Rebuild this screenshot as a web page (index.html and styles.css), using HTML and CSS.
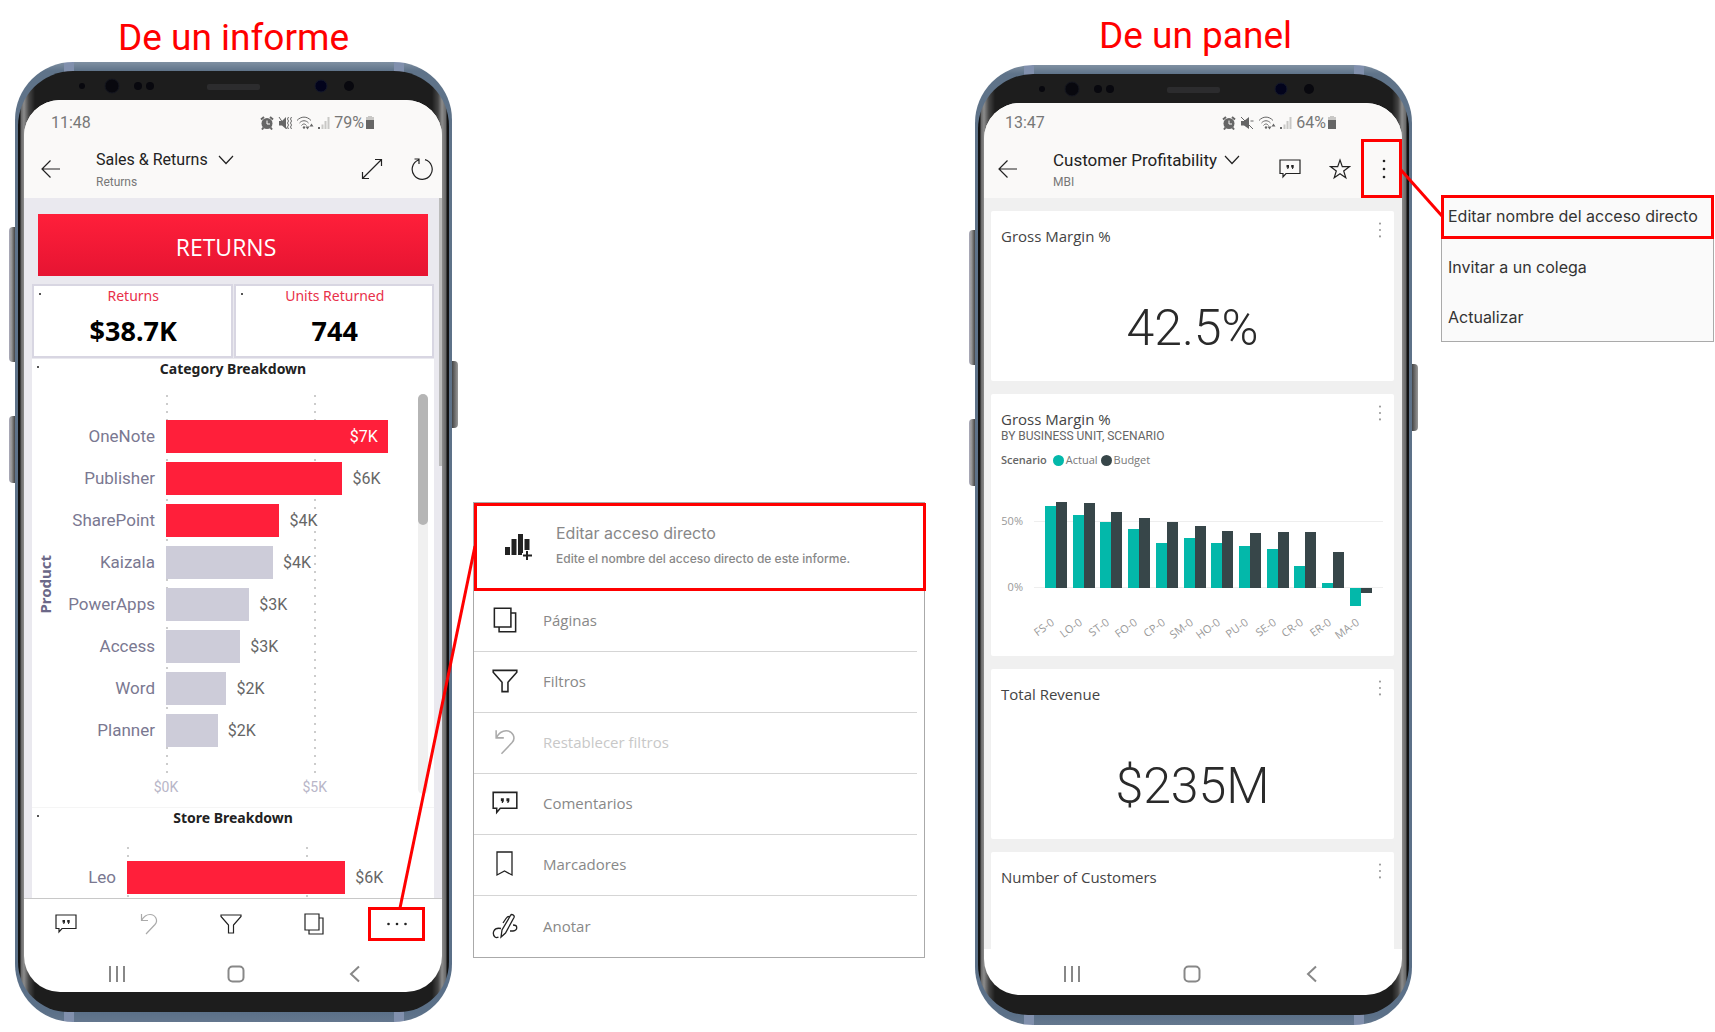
FILE: index.html
```html
<!DOCTYPE html>
<html lang="es">
<head>
<meta charset="utf-8">
<title>Editar acceso directo</title>
<link rel="stylesheet" href="styles.css">
</head>
<body>
<svg class="sprite" aria-hidden="true">
  <symbol id="back" viewBox="0 0 20 20"><path d="M19 10H1M9.500 1.500L1 10l8.500 8.500"/></symbol>
  <symbol id="chevron" viewBox="0 0 16 16"><path d="M1 4l7 7.500L15 4"/></symbol>
  <symbol id="expand" viewBox="0 0 22 22"><path d="M2 20L20 2M14 1.500H20.500V8M1.500 14v6.500H8"/></symbol>
  <symbol id="refresh" viewBox="0 0 22 22"><path d="M7.500 2A10 10 0 1 0 14 1.700M3.500 1h4.500v5"/></symbol>
  <symbol id="comment" viewBox="0 0 22 22"><path d="M1 2h20v13.500H7L4 19v-3.500H1z"/><path class="solid" d="M7.500 7h2.500v2.500l-1 1.500h-.8l.3-1.500h-1zM12.200 7h2.500v2.500l-1 1.500h-.8l.3-1.500h-1z"/></symbol>
  <symbol id="undo" viewBox="0 0 22 22"><path d="M3.500 1v6.500H10M3.500 7.500C6 3 9 1.500 12 1.500c5.500 0 8.500 6 5 10L8 21"/></symbol>
  <symbol id="filter" viewBox="0 0 22 22"><path d="M1 2h20v1.500L13.500 12v8h-5v-8L1 3.500z"/></symbol>
  <symbol id="pages" viewBox="0 0 22 22"><path d="M2 1h14v16H2zM16 5h4v16H6v-4"/></symbol>
  <symbol id="star" viewBox="0 0 22 22"><path d="M11 2l2.300 6.700h7L14.700 13l2.100 6.800L11 15.700l-5.800 4.100L7.300 13 1.700 8.700h7z"/></symbol>
  <symbol id="bookmark" viewBox="0 0 22 26"><path d="M3 1h15v23l-7.500-4L3 24z"/></symbol>
  <symbol id="annotate" viewBox="0 0 26 26"><path d="M9 24l1-7L18.500 2.500c1-2 4.500-.5 3.500 2L13.500 20 9 24zM9 15.500C1 14 0 21 3 24c1 .8 2.500.6 3.500 0M18 3.500c-2-.5-3 .5-4 2L11 10M21 12c5 0 5 5 0 6h-3"/></symbol>
  <symbol id="addreport" viewBox="0 0 28 28"><path class="solid" d="M1 14h5v8H1zM7.500 6h5v16h-5zM14 1h5v21h-5zM20.500 6h5v11h-5z"/><path class="halo" d="M23 17v10M18 22.500h10"/><path class="plus" d="M23 18v9M19 22.500h9"/></symbol>
  <symbol id="dots-h" viewBox="0 0 20 4"><circle class="solid" cx="1.500" cy="2" r="1.300"/><circle class="solid" cx="10" cy="2" r="1.300"/><circle class="solid" cx="18.500" cy="2" r="1.300"/></symbol>
  <symbol id="dots-v" viewBox="0 0 4 20"><circle class="solid" cx="2" cy="2" r="1.300"/><circle class="solid" cx="2" cy="10" r="1.300"/><circle class="solid" cx="2" cy="18" r="1.300"/></symbol>
  <symbol id="alarm" viewBox="0 0 14 14"><circle class="solid" cx="7" cy="7.500" r="5.500"/><path class="thick" d="M1 3.500l3-2.500M13 3.500L10 1M3.500 11.500L2 13.500M10.500 11.500l1.500 2"/><path class="cut" d="M7 4.500v3.500h3"/></symbol>
  <symbol id="mute" viewBox="0 0 14 14"><path class="solid" d="M1 5h3l5-4v12L4 9.500H1z"/><path d="M1 1l12 12M10.500 5h3"/></symbol>
  <symbol id="vibrate" viewBox="0 0 14 14"><path class="solid" d="M1 5h3l4-4v12L4 9.500H1z"/><path d="M1 1l8 12M10.500 1l-1 2 1 2-1 2 1 2-1 2 1 2M13.500 1l-1 2 1 2-1 2 1 2-1 2 1 2"/></symbol>
  <symbol id="wifi" viewBox="0 0 18 14"><path d="M1 4.500c4-4.500 10-4.500 14 0M3.500 7c2.500-3 6.500-3 9 0M5.500 9.500c1.500-2 3.500-2 5 0"/><circle class="solid" cx="8" cy="11.500" r="1.200"/><path class="solid" d="M9.500 10.500h4l-2 3zM13.500 10.500h4l-2-3z"/></symbol>
  <symbol id="signal" viewBox="0 0 12 14"><path class="solid" d="M0 11h2v2H0z"/><path class="faint" d="M3.500 8.500h2V13h-2zM6.500 5h2v8h-2zM9.500 1h2v12h-2z"/></symbol>
  <symbol id="battery" viewBox="0 0 10 14"><path class="faint" d="M3 0h4v1h2v3H1V1h2z"/><path class="solid" d="M1 4h8v9H1z"/></symbol>
  <symbol id="recents" viewBox="0 0 18 18"><path d="M2 1v16M9 1v16M16 1v16"/></symbol>
  <symbol id="home" viewBox="0 0 18 18"><rect x="1.500" y="1.500" width="15" height="15" rx="4"/></symbol>
  <symbol id="navback" viewBox="0 0 18 18"><path d="M13 1.500L5 9l8 7.500"/></symbol>
</svg>

<main class="page">
  <section class="example report-example">
    <div class="device">
      <h2 class="caption">De un informe</h2>
      <div class="phone">
        <span class="key key-volume"></span><span class="key key-assist"></span><span class="key key-power"></span>
        <div class="bezel">
          <svg class="sensors" viewBox="0 0 431 29" aria-hidden="true"><g fill="#08080e"><circle cx="64" cy="15" r="3"/><circle cx="94" cy="15" r="7" stroke="#14161f"/><circle cx="120" cy="15" r="4"/><circle cx="132" cy="15" r="4"/><circle cx="331" cy="15" r="5"/></g><circle cx="303" cy="15" r="6" fill="#02031c" stroke="#14182a"/><rect x="189" y="13" width="53" height="6" rx="2" fill="#2c2c2e"/></svg>
          <div class="screen">
            <div class="status"><time>11:48</time><div class="status-icons"><svg class="s14"><use href="#alarm"/></svg><svg class="s14"><use href="#vibrate"/></svg><svg class="s18"><use href="#wifi"/></svg><svg class="s12"><use href="#signal"/></svg><span>79%</span><svg class="s10"><use href="#battery"/></svg></div></div>
            <header class="appbar">
              <button class="tool back" aria-label="Atrás"><svg class="icon20"><use href="#back"/></svg></button>
              <div class="titles"><button class="title">Sales &amp; Returns<svg class="icon16"><use href="#chevron"/></svg></button><p class="subtitle">Returns</p></div>
              <div class="tools"><button class="tool" aria-label="Ampliar"><svg class="icon22"><use href="#expand"/></svg></button><button class="tool" aria-label="Actualizar"><svg class="icon22"><use href="#refresh"/></svg></button></div>
            </header>
            <div class="report">
              <h3 class="banner">RETURNS</h3>
              <div class="kpis">
                <div class="kpi dotted"><p class="kpi-label">Returns</p><p class="kpi-value">$38.7K</p></div>
                <div class="kpi dotted"><p class="kpi-label">Units Returned</p><p class="kpi-value">744</p></div>
              </div>
              <div class="visual dotted">
                <h4 class="visual-title">Category Breakdown</h4>
                <div class="bars category">
                  <p class="axis-title">Product</p>
                  <ul class="labels"><li>OneNote</li><li>Publisher</li><li>SharePoint</li><li>Kaizala</li><li>PowerApps</li><li>Access</li><li>Word</li><li>Planner</li></ul>
                  <ul class="plot">
                    <li><span class="bar hot inside" style="width:88%">$7K</span></li>
                    <li><span class="bar hot" style="width:70%"></span>$6K</li>
                    <li><span class="bar hot" style="width:45%"></span>$4K</li>
                    <li><span class="bar" style="width:42.500%"></span>$4K</li>
                    <li><span class="bar" style="width:33%"></span>$3K</li>
                    <li><span class="bar" style="width:29.500%"></span>$3K</li>
                    <li><span class="bar" style="width:24%"></span>$2K</li>
                    <li><span class="bar" style="width:20.500%"></span>$2K</li>
                  </ul>
                  <div class="scroll"><div class="thumb"></div></div>
                  <div class="ticks"><span>$0K</span><span>$5K</span></div>
                </div>
              </div>
              <div class="visual store dotted">
                <h4 class="visual-title">Store Breakdown</h4>
                <div class="bars stores">
                  <ul class="labels"><li>Leo</li></ul>
                  <ul class="plot"><li><span class="bar hot" style="width:75%"></span>$6K</li></ul>
                </div>
              </div>
            </div>
            <nav class="toolbar">
              <button class="tool" aria-label="Comentarios"><svg class="icon22"><use href="#comment"/></svg></button>
              <button class="tool muted" aria-label="Restablecer" disabled><svg class="icon22"><use href="#undo"/></svg></button>
              <button class="tool" aria-label="Filtros"><svg class="icon22"><use href="#filter"/></svg></button>
              <button class="tool" aria-label="Páginas"><svg class="icon22"><use href="#pages"/></svg></button>
              <button class="tool more-wide" aria-label="Más"><svg class="dots-wide"><use href="#dots-h"/></svg></button>
            </nav>
            <div class="sysnav"><svg class="icon18"><use href="#recents"/></svg><svg class="icon18"><use href="#home"/></svg><svg class="icon18"><use href="#navback"/></svg></div>
          </div>
        </div>
      </div>
    </div>
    <div class="menu">
      <button class="entry featured"><svg class="icon28"><use href="#addreport"/></svg><span><strong>Editar acceso directo</strong><small>Edite el nombre del acceso directo de este informe.</small></span></button>
      <button class="entry"><svg class="icon26"><use href="#pages"/></svg>Páginas</button>
      <button class="entry"><svg class="icon26"><use href="#filter"/></svg>Filtros</button>
      <button class="entry muted" disabled><svg class="icon26"><use href="#undo"/></svg>Restablecer filtros</button>
      <button class="entry"><svg class="icon26"><use href="#comment"/></svg>Comentarios</button>
      <button class="entry"><svg class="icon26"><use href="#bookmark"/></svg>Marcadores</button>
      <button class="entry"><svg class="icon26"><use href="#annotate"/></svg>Anotar</button>
    </div>
    <svg class="connector" viewBox="0 0 910 1022" preserveAspectRatio="none" aria-hidden="true"><path d="M385 908L460 546"/></svg>
  </section>

  <section class="example panel-example">
    <div class="device">
      <h2 class="caption">De un panel</h2>
      <div class="phone">
        <span class="key key-volume"></span><span class="key key-assist"></span><span class="key key-power"></span>
        <div class="bezel">
          <svg class="sensors" viewBox="0 0 431 29" aria-hidden="true"><g fill="#08080e"><circle cx="64" cy="15" r="3"/><circle cx="94" cy="15" r="7" stroke="#14161f"/><circle cx="120" cy="15" r="4"/><circle cx="132" cy="15" r="4"/><circle cx="331" cy="15" r="5"/></g><circle cx="303" cy="15" r="6" fill="#02031c" stroke="#14182a"/><rect x="189" y="13" width="53" height="6" rx="2" fill="#2c2c2e"/></svg>
          <div class="screen">
            <div class="status"><time>13:47</time><div class="status-icons"><svg class="s14"><use href="#alarm"/></svg><svg class="s14"><use href="#mute"/></svg><svg class="s18"><use href="#wifi"/></svg><svg class="s12"><use href="#signal"/></svg><span>64%</span><svg class="s10"><use href="#battery"/></svg></div></div>
            <header class="appbar">
              <button class="tool back" aria-label="Atrás"><svg class="icon20"><use href="#back"/></svg></button>
              <div class="titles"><button class="title">Customer Profitability<svg class="icon16"><use href="#chevron"/></svg></button><p class="subtitle">MBI</p></div>
              <div class="tools"><button class="tool" aria-label="Comentarios"><svg class="icon22"><use href="#comment"/></svg></button><button class="tool" aria-label="Favorito"><svg class="icon22"><use href="#star"/></svg></button></div>
              <button class="tool more-tall" aria-label="Más opciones"><svg class="dots-tall"><use href="#dots-v"/></svg></button>
            </header>
            <div class="dashboard">
              <article class="tile"><div class="tile-head"><h3>Gross Margin %</h3><svg class="tile-dots"><use href="#dots-v"/></svg></div><p class="figure">42.5%</p></article>
              <article class="tile chart-tile"><div class="tile-head"><h3>Gross Margin %</h3><svg class="tile-dots"><use href="#dots-v"/></svg></div>
                <p class="by">BY BUSINESS UNIT, SCENARIO</p>
                <p class="legend"><b>Scenario</b><span class="key-dot actual"></span>Actual<span class="key-dot budget"></span>Budget</p>
                <svg class="columns" viewBox="0 0 383 160">
                  <path d="M33 36.500H382M33 102.500H382" stroke="#eeeeee"/>
                  <g class="axis"><text x="22" y="40">50%</text><text x="22" y="106">0%</text></g>
                  <path class="series" fill="#03b8aa" d="M44 21h11v82H44zM72 30h11v73H72zM99 37h11v66H99zM127 44h11v59h-11zM155 58h11v45h-11zM183 53h11v50h-11zM210 58h11v45h-11zM238 61h11v42h-11zM266 64h11v39h-11zM293 81h11v22h-11zM321 98h11v5h-11zM349 103h11v18h-11z"/>
                  <path class="series" fill="#374649" d="M55 17h11v86H55zM83 18h11v85H83zM110 27h11v76h-11zM138 33h11v70h-11zM166 37h11v66h-11zM194 41h11v62h-11zM221 46h11v57h-11zM249 48h11v55h-11zM277 47h11v56h-11zM304 47h11v56h-11zM332 67h11v36h-11zM360 103h11v5h-11z"/>
                  <g class="axis">
                    <text transform="translate(54 139) rotate(-36)">FS-0</text><text transform="translate(82 139) rotate(-36)">LO-0</text><text transform="translate(109 139) rotate(-36)">ST-0</text><text transform="translate(137 139) rotate(-36)">FO-0</text><text transform="translate(165 139) rotate(-36)">CP-0</text><text transform="translate(193 139) rotate(-36)">SM-0</text><text transform="translate(220 139) rotate(-36)">HO-0</text><text transform="translate(248 139) rotate(-36)">PU-0</text><text transform="translate(276 139) rotate(-36)">SE-0</text><text transform="translate(303 139) rotate(-36)">CR-0</text><text transform="translate(331 139) rotate(-36)">ER-0</text><text transform="translate(359 139) rotate(-36)">MA-0</text>
                  </g>
                </svg>
              </article>
              <article class="tile"><div class="tile-head"><h3>Total Revenue</h3><svg class="tile-dots"><use href="#dots-v"/></svg></div><p class="figure">$235M</p></article>
              <article class="tile last"><div class="tile-head"><h3>Number of Customers</h3><svg class="tile-dots"><use href="#dots-v"/></svg></div></article>
            </div>
            <div class="sysnav"><svg class="icon18"><use href="#recents"/></svg><svg class="icon18"><use href="#home"/></svg><svg class="icon18"><use href="#navback"/></svg></div>
          </div>
        </div>
      </div>
    </div>
    <div class="popover">
      <button class="option chosen">Editar nombre del acceso directo</button>
      <button class="option">Invitar a un colega</button>
      <button class="option">Actualizar</button>
    </div>
    <svg class="connector" viewBox="0 0 739 1025" preserveAspectRatio="none" aria-hidden="true"><path d="M426 170L467 216"/></svg>
  </section>
</main>
</body>
</html>
```
FILE: styles.css
```css
* { box-sizing: border-box; }
body { margin: 0; background: #fff; font-family: Roboto, "Liberation Sans", sans-serif; color: #333; }
h2, h3, h4, p, ul { margin: 0; padding: 0; font-weight: 400; }
ul { list-style: none; }
button { border: 0; padding: 0; background: none; font: inherit; color: inherit; text-align: left; }
svg { display: block; flex: none; fill: none; stroke: currentColor; }
.sprite { position: absolute; width: 0; height: 0; }
.solid { fill: currentColor; stroke: none; }
.faint { fill: #c9c8c6; stroke: none; }
.cut { stroke: #faf9f8; }
.halo { stroke: #fff; stroke-width: 5; }
.plus { stroke-width: 2; }
.thick { stroke-width: 2; }

.page { display: grid; grid-template-columns: 910fr 739fr; column-gap: 50px; padding: 0 1px 7px 15px; }
.example { position: relative; display: grid; align-items: start; }
.report-example { grid-template-columns: 437fr 452fr; column-gap: 21px; }
.panel-example { grid-template-columns: 437fr 273fr; column-gap: 29px; }
.connector { position: absolute; inset: 0; width: 100%; height: 1022px; stroke: #f00; stroke-width: 3; pointer-events: none; }
.panel-example .connector { height: 1025px; }
.caption { padding-top: 16px; margin-bottom: 2px; font-size: 37px; line-height: 44px; color: #f00; text-align: center; }
.panel-example .caption { padding: 14px 0 0 4px; margin-bottom: 7px; }

/* handset */
.phone { position: relative; padding: 9px 3px 10px; border-radius: 58px;
  background: linear-gradient(90deg, transparent 49px, #8190ad 49px 59px, transparent 59px calc(100% - 58px), #8190ad calc(100% - 58px) calc(100% - 48px), transparent calc(100% - 48px)), linear-gradient(#7f90a2, #5f7389 9px, #5b7088 950px, #64778e); }
.bezel { position: relative; padding: 29px 7px 20px 6px; border-radius: 55px 55px 50px 50px;
  background: linear-gradient(90deg, #111 2px, #666 3px, #8c8c8c 6px, #444 11px, #1d1d1d 17px calc(100% - 17px), #444 calc(100% - 11px), #8c8c8c calc(100% - 7px), #666 calc(100% - 3px), #111 calc(100% - 2px)); }
.sensors { position: absolute; left: 0; top: 0; width: 100%; height: 29px; stroke: none; }
.screen { display: flex; flex-direction: column; overflow: hidden; border-radius: 36px; background: #fff; }
.key { position: absolute; width: 6px; background: linear-gradient(90deg, #aab, #999 40%, #444); }
.key-volume { left: -6px; top: 165px; height: 135px; border-radius: 4px 0 0 4px; }
.key-assist { left: -6px; top: 354px; height: 67px; border-radius: 4px 0 0 4px; }
.key-power { right: -6px; top: 299px; height: 67px; border-radius: 0 4px 4px 0; background: linear-gradient(90deg, #444, #999); }

.status { display: flex; justify-content: space-between; align-items: flex-start; height: 48px; padding: 13px 67px 0 27px; background: #faf9f8; font-size: 16px; line-height: 20px; color: #777; }
.status-icons { display: flex; gap: 4px; align-items: center; }
.status-icons svg { color: #666; }
.status-icons span { margin-right: -3px; }
.s14 { width: 14px; height: 14px; } .s18 { width: 18px; height: 14px; } .s12 { width: 12px; height: 14px; } .s10 { width: 10px; height: 14px; }
.panel-example .status { height: 45px; padding: 10px 65px 0 21px; }
.appbar { display: flex; align-items: center; height: 50px; padding: 0 9px 8px 17px; background: #faf9f8; color: #222; }
.appbar svg, .toolbar svg { stroke-width: 1.200; }
.panel-example .appbar { padding: 0 0 8px 14px; }
.back { margin-right: 35px; }
.titles { flex: 1; padding-top: 2px; }
.title { display: flex; gap: 10px; align-items: center; font-size: 16px; line-height: 20px; white-space: nowrap; }
.panel-example .title { font-size: 17px; gap: 7px; }
.subtitle { margin-top: 4px; font-size: 12px; line-height: 16px; color: #777; }
.tools { display: flex; gap: 28px; }
.icon16 { width: 16px; height: 16px; } .icon18 { width: 18px; height: 18px; } .icon20 { width: 20px; height: 20px; }
.icon22 { width: 22px; height: 22px; } .icon26 { width: 26px; height: 26px; } .icon28 { width: 28px; height: 28px; }
.more-tall { display: grid; place-items: center; width: 41px; height: 59px; margin: -9px 0 -8px 10px; align-self: flex-end; padding-left: 4px; border: 3px solid #f00; }
.dots-tall { width: 4px; height: 20px; }

/* report */
.report { position: relative; padding: 16px 8px 0; background: #eae9ef; }
.report::after { content: ""; position: absolute; right: 0; top: 0; width: 3px; height: 268px; background: #bbb; }
.kpi, .visual-title, .axis-title { font-family: "Noto Sans", "Open Sans", sans-serif; }
.banner, .menu, .tile { font-family: "Open Sans", "Noto Sans", sans-serif; }
.banner { height: 62px; margin: 0 6px 8px; padding: 2px 14px 0 0; background: linear-gradient(#ff1f3a, #e61432); color: #fff; font-size: 23px; line-height: 62px; text-align: center; }
.kpis { display: grid; grid-template-columns: 1fr 1fr; column-gap: 1px; margin-bottom: 1px; }
.kpi { border: 2px solid #d8d6e2; background: #fff; text-align: center; padding: 0 0 5px 2px; }
.dotted { position: relative; }
.dotted::before { content: ""; position: absolute; left: 5px; top: 7px; width: 2px; height: 2px; background: #555; }
.kpi-label { margin-bottom: 5px; font-size: 14px; line-height: 20px; color: #e8304a; }
.kpi-value { font-size: 27px; line-height: 40px; font-weight: 700; color: #000; }
.visual { background: #fff; }
.visual-title { font-size: 14px; line-height: 20px; font-weight: 700; color: #222; text-align: center; }
.bars { display: grid; font-size: 16px; }
.category { grid-template-columns: 26px 97px 1fr 10px; padding: 16px 6px 10px 0; }
.axis-title { align-self: center; justify-self: center; writing-mode: vertical-rl; transform: rotate(180deg); font-size: 15px; line-height: 20px; font-weight: 700; color: #6b6888; }
.labels { padding: 20px 0 22px; color: #7a7891; font-size: 17px; text-align: right; line-height: 42px; }
.plot { margin-left: 11px; padding: 20px 0 22px;
  background: linear-gradient(#ccc 2px, transparent 2px) 0 0 / 2px 8px repeat-y, linear-gradient(#ccc 2px, transparent 2px) 59% 0 / 2px 8px repeat-y; }
.plot li { display: flex; gap: 10px; align-items: center; height: 42px; color: #666; line-height: 33px; }
.bar { flex: none; height: 33px; background: #cdccd9; }
.hot { background: #ff1f3a; }
.inside { padding-right: 10px; color: #fff; text-align: right; }
.scroll { grid-row: 1 / 3; grid-column: 4; margin-top: -1px; margin-bottom: 3px; border-radius: 5px; background: #f0f0f0; }
.thumb { height: 131px; border-radius: 5px; background: #b5b5b5; }
.ticks { grid-row: 2; grid-column: 3; display: grid; grid-template-columns: 59% 1fr; margin: 4px 0 0 11px; font-size: 14px; line-height: 20px; color: #b8b6c8; }
.ticks span { width: 28px; margin-left: -14px; text-align: center; }
.store { border-top: 1px solid #f5f5f5; }
.stores { grid-template-columns: 84px 1fr; padding: 19px 16px 0 0; }
.stores .labels { padding: 10px 0 0; line-height: 41px; }
.stores .plot { padding: 10px 0 0; background-position: 0 0, 62% 0; }
.stores .plot li { height: 41px; }
.toolbar { display: grid; grid-template-columns: repeat(5, 1fr); place-items: center; height: 51px; padding: 0 4px 0 1px; border-top: 1px solid #c8c8c8; color: #222; }
.muted { color: #aaa; }
.more-wide { display: grid; place-items: center; width: 57px; height: 34px; border: 3px solid #f00; }
.dots-wide { width: 20px; height: 4px; }
.sysnav { display: grid; grid-template-columns: repeat(3, 1fr); place-items: center; height: 43px; padding: 7px 28px 0 34px; color: #888; }
.sysnav svg { stroke-width: 2; }
.panel-example .sysnav { height: 46px; padding: 3px 30px 0 28px; }

/* context menus */
.menu { display: flex; flex-direction: column; margin-top: 502px; padding-right: 7px; border: 1px solid #aaa; font-size: 15px; color: #888; }
.entry { display: flex; align-items: center; gap: 25px; height: 61px; padding: 0 0 2px 18px; border-bottom: 1px solid #d5d5d5; }
.entry:last-child { border-bottom: 0; }
.entry svg { color: #222; stroke-width: 1.300; }
.entry.muted { color: #c8c8c8; }
.entry.muted svg { color: #aaa; }
.entry.featured { height: 88px; margin-right: -9px; padding: 0 0 0 27px; gap: 24px; border: 3px solid #f00; font-family: Inter, sans-serif; }
.entry strong, .entry small { display: block; font-size: 16px; line-height: 24px; font-weight: 400; }
.entry small { font-size: 12px; line-height: 28px; font-weight: 500; white-space: nowrap; }
.popover { display: flex; flex-direction: column; margin-top: 195px; border: 1px solid #aaa; background: #fafafa; font-family: Inter, sans-serif; font-size: 16px; color: #333; }
.option { height: 51px; padding-left: 6px; line-height: 20px; white-space: nowrap; }
.option:last-child { height: 49px; }
.option.chosen { display: flex; height: 44px; margin: -1px -1px 2px; padding: 8px 0 0 4px; border: 3px solid #f00; }

/* dashboard */
.dashboard { display: flex; flex-direction: column; gap: 13px; padding: 13px 8px 0 7px; background: #f0f0f0; }
.tile { padding: 15px 10px 23px; border-radius: 2px; background: #fff; color: #444; }
.tile-head { display: flex; justify-content: space-between; }
.tile h3 { font-size: 15px; line-height: 20px; }
.tile-dots { width: 4px; height: 16px; margin: -4px 2px 0 0; color: #999; }
.figure { margin-top: 52px; font-family: Roboto, sans-serif; font-size: 50px; line-height: 60px; font-weight: 300; color: #2a2a2a; text-align: center; }
.chart-tile { padding-bottom: 11px; }
.by { margin-top: 1px; font-family: Roboto, sans-serif; font-size: 12px; line-height: 12px; color: #666; }
.legend { display: flex; align-items: center; margin: 10px 0 0; font-size: 11px; line-height: 16px; color: #777; }
.legend b { font-weight: 600; color: #666; margin-right: 6px; }
.key-dot { width: 11px; height: 11px; margin-right: 2px; border-radius: 50%; }
.actual { background: #03b8aa; }
.budget { margin-left: 3px; background: #374649; }
.columns { width: 100%; margin-top: 17px; }
.series { stroke: none; }
.axis { fill: #999; stroke: none; font-size: 11px; text-anchor: end; }
.last { padding-bottom: 62px; border-radius: 2px 2px 0 0; }
```
